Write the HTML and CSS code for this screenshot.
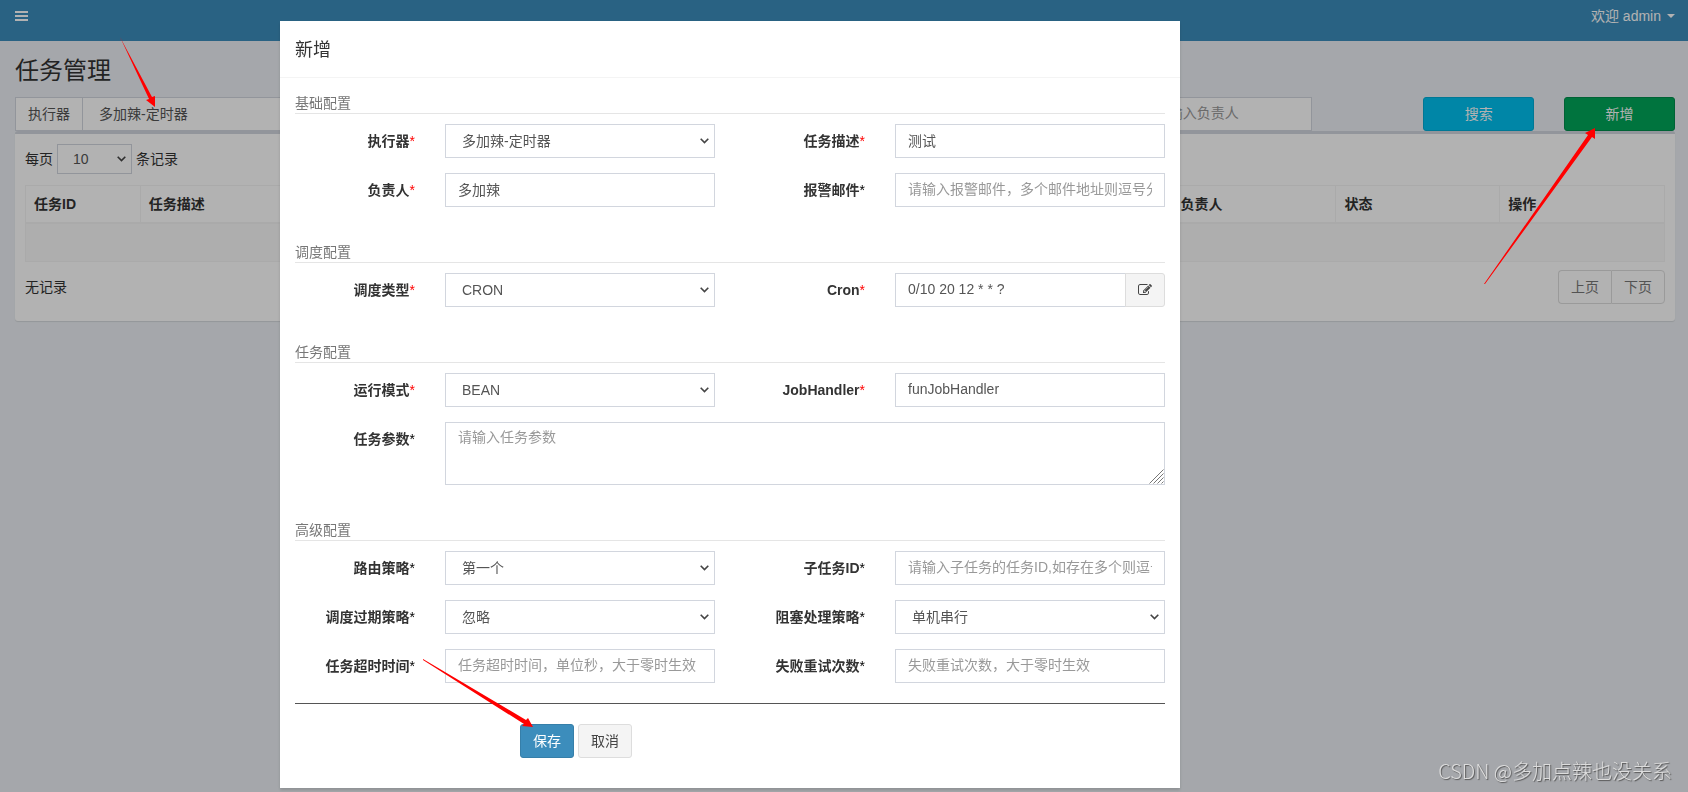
FILE: index.html
```html
<!DOCTYPE html>
<html lang="zh-CN">
<head>
<meta charset="utf-8">
<title>任务管理</title>
<link rel="stylesheet" href="styles.css">
</head>
<body>
<header class="navbar">
  <button class="nav-toggle" type="button" aria-label="菜单">
    <svg width="13" height="10" viewBox="0 0 13 10" fill="currentColor"><path d="M0 0h13v2H0zM0 4h13v2H0zM0 8h13v2H0z"/></svg>
  </button>
  <button class="nav-user" type="button">欢迎 admin <span class="caret"></span></button>
</header>
<main class="content">
  <h1 class="page-title">任务管理</h1>
  <div class="filters">
    <div class="input-group filter-group">
      <label class="addon" for="filter-group">执行器</label>
      <select class="control" id="filter-group"><option>多加辣-定时器</option></select>
    </div>
    <input class="control filter-author" type="text" aria-label="负责人" placeholder="请输入负责人">
    <button class="btn btn-info filter-search" type="button">搜索</button>
    <button class="btn btn-success" type="button">新增</button>
  </div>
  <section class="box">
    <div class="page-length">
      <label for="length">每页</label>
      <select class="control control-sm" id="length"><option>10</option></select>
      <span>条记录</span>
    </div>
    <table class="table">
      <colgroup><col class="col-id"><col><col class="col-tenth"><col class="col-tenth"><col class="col-tenth"></colgroup>
      <thead><tr><th>任务ID</th><th>任务描述</th><th>负责人</th><th>状态</th><th>操作</th></tr></thead>
      <tbody><tr><td colspan="5"></td></tr></tbody>
    </table>
    <div class="table-footer">
      <span class="table-info">无记录</span>
      <nav class="pagination"><button type="button">上页</button><button type="button">下页</button></nav>
    </div>
  </section>
</main>

<div class="backdrop">
  <div class="modal" role="dialog" aria-labelledby="modal-title">
    <div class="modal-header"><h4 id="modal-title">新增</h4></div>
    <form class="modal-body">
      <p class="section">基础配置</p>
      <div class="form-row">
        <label for="executor">执行器<span class="required">*</span></label>
        <select class="control" id="executor"><option>多加辣-定时器</option></select>
        <label for="desc">任务描述<span class="required">*</span></label>
        <input class="control" id="desc" type="text" value="测试">
      </div>
      <div class="form-row">
        <label for="author">负责人<span class="required">*</span></label>
        <input class="control" id="author" type="text" value="多加辣">
        <label for="email">报警邮件<span class="optional">*</span></label>
        <input class="control" id="email" type="text" placeholder="请输入报警邮件，多个邮件地址则逗号分隔">
      </div>
      <p class="section">调度配置</p>
      <div class="form-row">
        <label for="schedule">调度类型<span class="required">*</span></label>
        <select class="control" id="schedule"><option>CRON</option></select>
        <label for="cron">Cron<span class="required">*</span></label>
        <div class="input-group">
          <input class="control" id="cron" type="text" value="0/10 20 12 * * ?">
          <button class="btn btn-default btn-edit" type="button" aria-label="编辑">
            <svg width="14" height="14" viewBox="0 0 1792 1792" fill="currentColor"><path d="M888 1184l116-116-152-152-116 116v56h96v96h56zm440-720q-16-16-33 1l-350 350q-17 17-1 33t33-1l350-350q17-17 1-33zm80 594v190q0 119-84.5 203.5t-203.5 84.5h-832q-119 0-203.5-84.5t-84.5-203.5v-832q0-119 84.5-203.5t203.5-84.5h832q63 0 117 25 15 7 18 23 3 17-9 29l-49 49q-14 14-32 8-23-6-45-6h-832q-66 0-113 47t-47 113v832q0 66 47 113t113 47h832q66 0 113-47t47-113v-126q0-13 9-22l64-64q15-15 35-7t20 29zm-96-738l288 288-672 672h-288v-288zm444 132l-92 92-288-288 92-92q28-28 68-28t68 28l152 152q28 28 28 68t-28 68z"/></svg>
          </button>
        </div>
      </div>
      <p class="section">任务配置</p>
      <div class="form-row">
        <label for="glue">运行模式<span class="required">*</span></label>
        <select class="control" id="glue"><option>BEAN</option></select>
        <label for="handler">JobHandler<span class="required">*</span></label>
        <input class="control" id="handler" type="text" value="funJobHandler">
      </div>
      <div class="form-row">
        <label for="param">任务参数<span class="optional">*</span></label>
        <div class="textarea-wrap">
          <textarea class="control" id="param" placeholder="请输入任务参数"></textarea>
          <svg class="grip" width="15" height="15" viewBox="0 0 15 15" fill="none" stroke="#777"><path d="M0.5 14.5 14.5 0.5M4.5 14.5 14.5 4.5M8.5 14.5 14.5 8.5M12.5 14.5 14.5 12.5"/></svg>
        </div>
      </div>
      <p class="section">高级配置</p>
      <div class="form-row">
        <label for="route">路由策略<span class="optional">*</span></label>
        <select class="control" id="route"><option>第一个</option></select>
        <label for="child">子任务ID<span class="optional">*</span></label>
        <input class="control" id="child" type="text" placeholder="请输入子任务的任务ID,如存在多个则逗号分隔">
      </div>
      <div class="form-row">
        <label for="misfire">调度过期策略<span class="optional">*</span></label>
        <select class="control" id="misfire"><option>忽略</option></select>
        <label for="block">阻塞处理策略<span class="optional">*</span></label>
        <select class="control" id="block"><option>单机串行</option></select>
      </div>
      <div class="form-row">
        <label for="timeout">任务超时时间<span class="optional">*</span></label>
        <input class="control" id="timeout" type="text" placeholder="任务超时时间，单位秒，大于零时生效">
        <label for="retry">失败重试次数<span class="optional">*</span></label>
        <input class="control" id="retry" type="text" placeholder="失败重试次数，大于零时生效">
      </div>
      <hr>
      <div class="actions">
        <button class="btn btn-primary" type="button">保存</button>
        <button class="btn btn-default" type="button">取消</button>
      </div>
    </form>
  </div>
</div>

<svg class="arrows" fill="#f00" aria-hidden="true">
  <path d="M120 37 152 97 155 96V107L146 100 149 99Z"/>
  <path d="M1484 284 1588 135 1585 133 1595 128V139L1592 137 1485 284Z"/>
  <path d="M423 659 526 720 528 718 533 727 522 726 524 724 423 660Z"/>
</svg>
<div class="watermark">CSDN @多加点辣也没关系</div>
</body>
</html>
```
FILE: styles.css
```css
* { box-sizing: border-box; }

body {
  margin: 0;
  min-height: 100vh;
  background: #ecf0f5;
  color: #333;
  font: 14px/20px "Liberation Sans", "Noto Sans CJK SC", sans-serif;
}

button, input, select, textarea { font: inherit; }
h1, h4, p { margin: 0; font-weight: 400; }

.navbar {
  display: flex;
  justify-content: space-between;
  align-items: flex-start;
  height: 41px;
  padding: 6px 13px 0 15px;
  background: #3c8dbc;
}
.nav-toggle, .nav-user {
  display: flex;
  align-items: center;
  height: 20px;
  padding: 0;
  border: 0;
  background: none;
  color: #fff;
}
.caret {
  margin-left: 6px;
  border: 4px solid transparent;
  border-top-color: #fff;
  border-bottom: 0;
}

.content { padding: 14px 13px 0 15px; }
.page-title {
  margin-bottom: 10px;
  font-size: 24px;
  line-height: 32px;
}

.control {
  width: 100%;
  min-width: 0;
  height: 34px;
  padding: 6px 12px;
  border: 1px solid #d2d6de;
  border-radius: 0;
  background: #fff;
  color: #555;
  outline: 0;
}
.control::placeholder { color: #999; }
input.control { padding: 5px 12px 7px; }
select.control {
  appearance: none;
  padding: 6px 16px;
  background: #fff url("data:image/svg+xml,%3Csvg xmlns='http://www.w3.org/2000/svg' width='9' height='6' fill='none' stroke='%23444' stroke-width='1.6'%3E%3Cpath d='M.7 .7 4.5 4.5 8.3 .7'/%3E%3C/svg%3E") no-repeat right 5px center;
}
.input-group { display: flex; }
.addon {
  flex: none;
  padding: 6px 12px;
  border: 1px solid #d2d6de;
  border-right: 0;
  background: #fff;
  color: #555;
}

.btn {
  height: 34px;
  padding: 6px 12px;
  border: 1px solid;
  border-radius: 3px;
  line-height: 20px;
}
.btn-info { background: #00c0ef; border-color: #00acd6; color: #fff; }
.btn-success { background: #00a65a; border-color: #008d4c; color: #fff; }
.btn-primary { background: #3c8dbc; border-color: #367fa9; color: #fff; }
.btn-default { background: #f4f4f4; border-color: #ddd; color: #444; }

.filters {
  display: grid;
  grid-template-columns: repeat(12, 1fr);
  gap: 30px;
}
.filter-group { grid-column: 1 / span 3; }
.filter-author { grid-column: 9 / span 2; width: 170px; }
.filter-search { grid-column: 11; }

.box {
  padding: 10px 10px 17px;
  border-top: 3px solid #d2d6de;
  border-radius: 3px;
  background: #fff;
  box-shadow: 0 1px 1px rgba(0, 0, 0, .1);
}
.page-length {
  display: flex;
  align-items: center;
  gap: 4px;
  margin-bottom: 11px;
}
select.control-sm { width: 75px; height: 30px; padding: 4px 15px; }

.table {
  width: 100%;
  table-layout: fixed;
  border-collapse: separate;
  border-spacing: 0;
  border: 1px solid #f4f4f4;
}
.col-id { width: 7%; }
.col-tenth { width: 10%; }
.table th {
  height: 38px;
  padding: 8px;
  border-bottom: 2px solid #f4f4f4;
  border-right: 1px solid #f4f4f4;
  text-align: left;
}
.table th:last-child { border-right: 0; }
.table td { height: 37px; background: #f9f9f9; }

.table-footer {
  display: flex;
  justify-content: space-between;
  align-items: center;
  margin-top: 8px;
}
.pagination { display: flex; }
.pagination button {
  height: 34px;
  padding: 6px 12px;
  border: 1px solid #ddd;
  border-radius: 0 4px 4px 0;
  background: #fff;
  color: #777;
}
.pagination button:first-child { border-right: 0; border-radius: 4px 0 0 4px; }

.backdrop {
  position: fixed;
  inset: 0;
  padding: 21px 228px 0 0;
  background: rgba(0, 0, 0, .3);
  overflow: hidden;
}
.modal {
  max-width: 900px;
  margin: 0 auto;
  background: #fff;
  box-shadow: 0 2px 3px rgba(0, 0, 0, .15);
}
.modal-header { padding: 16px 15px 14px; border-bottom: 1px solid #f4f4f4; }
.modal-header h4 { font-size: 18px; line-height: 26px; }
.modal-body { padding: 15px 15px 30px; }
.section {
  margin: 35px 0 10px;
  border-bottom: 1px solid #e5e5e5;
  color: #777;
}
.section:first-child { margin-top: 0; }
.form-row {
  display: grid;
  grid-template-columns: minmax(0, 120fr) minmax(0, 270fr) minmax(0, 120fr) minmax(0, 270fr);
  column-gap: 30px;
  align-items: start;
  margin-bottom: 15px;
}
.form-row label {
  padding-top: 7px;
  font-weight: 700;
  text-align: right;
  white-space: nowrap;
}
.required { color: #f00; font-weight: 400; }
.optional { color: #000; font-weight: 400; }
.btn-edit {
  display: flex;
  align-items: center;
  flex: none;
  margin-left: -1px;
  border-radius: 0 3px 3px 0;
}
.textarea-wrap { position: relative; grid-column: 2 / -1; }
.textarea-wrap textarea { display: block; height: 63px; resize: none; padding: 4px 12px; }
.grip { position: absolute; right: 1px; bottom: 1px; }
hr { margin: 20px 0; border: 0; border-top: 1px solid #555; }
.actions { display: flex; gap: 4px; padding-left: 225px; }

.arrows {
  position: fixed;
  inset: 0;
  width: 100%;
  height: 100%;
  pointer-events: none;
}
.watermark {
  position: fixed;
  right: 16px;
  bottom: 6px;
  color: #ddd;
  font: 20px/30px "Noto Sans CJK SC", sans-serif;
  font-weight: 300;
  text-shadow: 1px 1px 1px #555;
}
```
